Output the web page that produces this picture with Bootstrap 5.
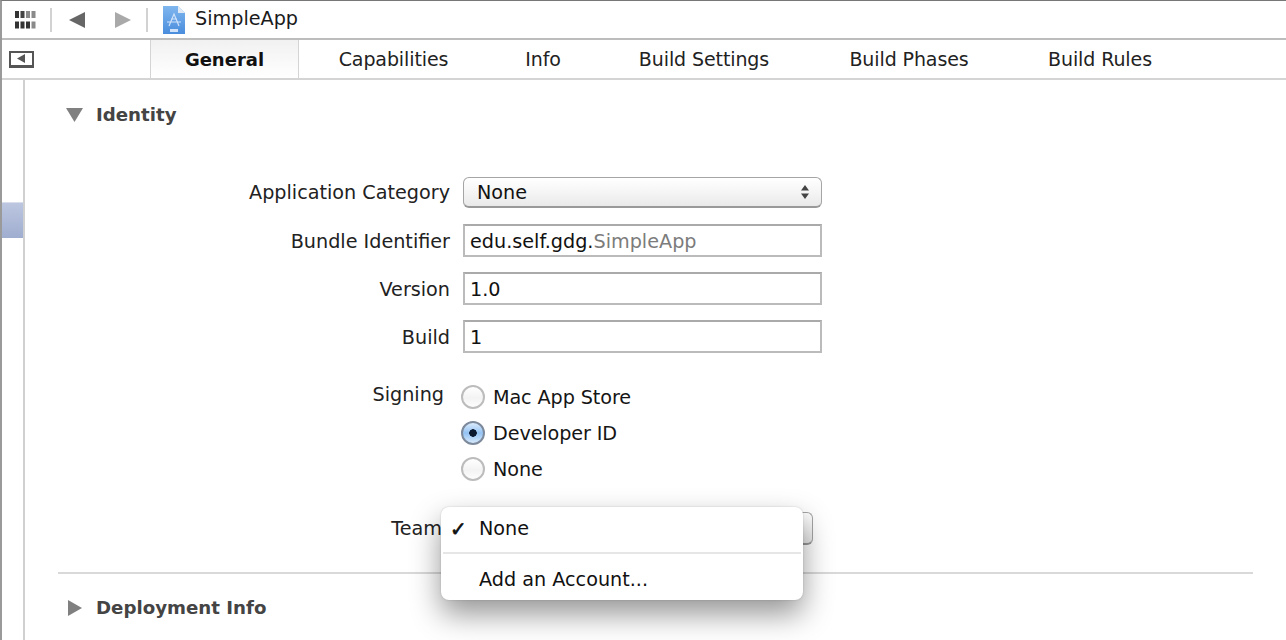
<!doctype html>
<html lang="en"><head><meta charset="utf-8"><title>SimpleApp</title>
<link rel="stylesheet" href="https://cdn.jsdelivr.net/npm/bootstrap@5.3.0/dist/css/bootstrap.min.css">
<style>
html,body{height:640px;overflow:hidden;background:#fff}
body{font-family:"DejaVu Sans",sans-serif;font-size:19.2px;color:#1a1a1a}
.xc-app{height:640px;border-left:2px solid #9a9a9a;border-top:1px solid #777}
.xc-top{height:39px;border-bottom:2px solid #bdbdbd;padding-left:13px}
.xc-sep{width:2px;height:24px;background:#d2d2d2;flex:none}
.xc-grid{margin-right:14px}
.xc-back{margin:0 30px 0 17px}
.xc-fwd{margin-right:15px}
.xc-doc{margin:0 10px 0 15px}
.xc-tabs{height:40px;border-bottom:2px solid #d4d4d4;background:#fff}
.xc-tog{width:25px;height:17px;border:2px solid #555;border-bottom-width:3px;margin-left:7px;margin-right:116px;background:#fff}
.xc-tab{height:38px;line-height:39px;font-size:19px;letter-spacing:-.1px;text-align:center;color:#222;flex:none}
.xc-act{width:149px;font-size:18px;letter-spacing:0;font-weight:700;color:#111;border-left:1px solid #d4d4d4;border-right:1px solid #d4d4d4;background:linear-gradient(#f1f1f1,#fff)}
.xc-t1{width:189px}.xc-t2{width:110px}.xc-t3{width:212px}.xc-t4{width:198px}.xc-t5{width:184px}
.xc-body{flex:1;min-height:0}
.xc-side{width:23px;border-right:2px solid #d0d0d0;flex:none;padding-top:122px}
.xc-mark{height:36px;width:21px;background:linear-gradient(#bcc6e0,#9fadcf);border-top:1px solid #d8deec}
.xc-main{flex:1;padding-left:33px;padding-right:33px;min-width:0}
.xc-head{font-weight:700;color:#444;font-size:18.2px;gap:13px}
.xc-head1{height:24px;margin-top:23px;margin-left:8px}
.xc-head1 span{margin-top:-1px}
.xc-head2{margin-top:20px;margin-left:10px;gap:14px}
.xc-form{margin-top:50px;position:relative}
.xc-row{display:flex;align-items:baseline;gap:13px}
.xc-gap1{margin-top:16px}.xc-gap2{margin-top:15px}.xc-gap3{margin-top:26px}.xc-gap4{margin-top:25px}
.xc-lab{width:392px;text-align:right;flex:none;color:#222}
.xc-signlab{line-height:32px;padding-right:6px}
.xc-teamlab{padding-right:8px;padding-top:2px}
.xc-ctl{width:359px;height:33px;border:2px solid #bbb;border-top-color:#aaa;padding-left:5px;line-height:31px;color:#111}
.xc-sel{height:31px;border:1px solid #a5a5a5;border-bottom:2px solid #999;border-radius:6px;padding-left:13px;background:linear-gradient(#fff,#f4f4f4 55%,#e9e9e9);line-height:27px}
.xc-teamsel{width:350px;height:33px}
.xc-arrows{margin-right:11px}
.xc-dim{color:#7c7c7c}
.xc-radio{width:24px;height:24px;border-radius:50%;border:2px solid #bcbcbc;background:linear-gradient(#fff,#f3f3f3 55%,#fdfdfd);flex:none}
.xc-on{background:radial-gradient(circle at 50% 50%,#0c1a30 0 3.5px,transparent 4px),linear-gradient(#dcebfc,#93c2f3 50%,#d6e9fc);border-color:#7d8a9c}
.xc-opt{display:flex;align-items:center;gap:8px;height:36px;margin-left:-2px;color:#151515;letter-spacing:-.1px}
.xc-tx{padding-top:2px}
.xc-menu{position:absolute;left:383px;top:330px;width:362px;height:93px;background:#fff;border-radius:8px;box-shadow:0 14px 30px rgba(0,0,0,.42),0 0 2px rgba(0,0,0,.18);z-index:2;color:#111}
.xc-mi{height:45px;line-height:44px;padding-left:38px;position:relative}
.xc-mi2{line-height:51px;height:46px}
.xc-chk{position:absolute;left:9px;top:0;font-size:20px;font-weight:700;-webkit-text-stroke:.7px #111}
.xc-msep{height:2px;background:#e6e6e6;margin:0 2px}
.xc-rule{height:2px;background:#d9d9d9;margin-top:27px}
</style></head>
<body>
<div class="xc-app d-flex flex-column">
  <div class="xc-top d-flex align-items-center">
    <svg class="xc-grid" width="21" height="18" viewBox="0 0 21 18"><g fill="#333"><rect width="4" height="7" x="0" y="0"/><rect width="4" height="7" x="5.5" y="0" fill="#444"/><rect width="4" height="7" x="11" y="0" fill="#8a8a8a"/><rect width="4" height="7" x="16.5" y="0" fill="#8a8a8a"/><rect width="4" height="7" x="0" y="10.5"/><rect width="4" height="7" x="5.5" y="10.5"/><rect width="4" height="7" x="11" y="10.5"/><rect width="4" height="7" x="16.5" y="10.5" fill="#8a8a8a"/></g></svg>
    <span class="xc-sep"></span>
    <svg class="xc-back" width="16" height="16" viewBox="0 0 16 16"><path d="M0 8 16 0V16Z" fill="#666"/></svg>
    <svg class="xc-fwd" width="16" height="16" viewBox="0 0 16 16"><path d="M16 8 0 0V16Z" fill="#a9a9a9"/></svg>
    <span class="xc-sep"></span>
    <svg class="xc-doc" width="22" height="28" viewBox="0 0 22 28"><defs><linearGradient id="xcd" x1="0" y1="0" x2="0" y2="1"><stop offset="0" stop-color="#7fb6ee"/><stop offset="1" stop-color="#4a8ddd"/></linearGradient></defs><path d="M0 0H15L22 7V28H0Z" fill="url(#xcd)"/><path d="M15 0 22 7H15Z" fill="#dfe9f6"/><path d="M6 20 11 8 16 20M4 16H18M8 13H14" fill="none" stroke="#cfe2fa" stroke-width="1.2"/><rect x="7" y="23" width="8" height="3" fill="#cfe2fa"/></svg>
    <span>SimpleApp</span>
  </div>
  <div class="xc-tabs d-flex">
    <div class="d-flex align-items-center">
      <div class="xc-tog d-flex align-items-center justify-content-center"><svg width="9" height="9" viewBox="0 0 9 9"><path d="M0 4.5 8 0V9Z" fill="#555"/></svg></div>
    </div>
    <div class="xc-tab xc-act">General</div>
    <div class="xc-tab xc-t1">Capabilities</div>
    <div class="xc-tab xc-t2">Info</div>
    <div class="xc-tab xc-t3">Build Settings</div>
    <div class="xc-tab xc-t4">Build Phases</div>
    <div class="xc-tab xc-t5">Build Rules</div>
  </div>
  <div class="xc-body d-flex">
    <div class="xc-side"><div class="xc-mark"></div></div>
    <div class="xc-main">
      <div class="xc-head xc-head1 d-flex align-items-center">
        <svg width="17" height="14" viewBox="0 0 17 14"><path d="M0 0H17L8.5 14Z" fill="#808080"/></svg><span>Identity</span>
      </div>
      <div class="xc-form">
        <div class="xc-row"><div class="xc-lab">Application Category</div>
          <div class="xc-ctl xc-sel d-flex justify-content-between align-items-center"><span>None</span><svg class="xc-arrows" width="10" height="16" viewBox="0 0 10 16"><path d="M5 1 9 6.5H1ZM5 15 9 9.5H1Z" fill="#444"/></svg></div></div>
        <div class="xc-row xc-gap1"><div class="xc-lab">Bundle Identifier</div><div class="xc-ctl">edu.self.gdg.<span class="xc-dim">SimpleApp</span></div></div>
        <div class="xc-row xc-gap2"><div class="xc-lab">Version</div><div class="xc-ctl">1.0</div></div>
        <div class="xc-row xc-gap2"><div class="xc-lab">Build</div><div class="xc-ctl">1</div></div>
        <div class="xc-row align-items-start xc-gap3">
          <div class="xc-lab xc-signlab">Signing</div>
          <div>
            <div class="xc-opt"><span class="xc-radio"></span><span class="xc-tx">Mac App Store</span></div>
            <div class="xc-opt"><span class="xc-radio xc-on"></span><span class="xc-tx">Developer ID</span></div>
            <div class="xc-opt"><span class="xc-radio"></span><span class="xc-tx">None</span></div>
          </div>
        </div>
        <div class="xc-row align-items-center xc-gap4"><div class="xc-lab xc-teamlab">Team</div><div class="xc-ctl xc-sel xc-teamsel"></div></div>
        <div class="xc-menu">
          <div class="xc-mi"><span class="xc-chk">✓</span>None</div>
          <div class="xc-msep"></div>
          <div class="xc-mi xc-mi2">Add an Account...</div>
        </div>
        <div class="xc-rule"></div>
        <div class="xc-head xc-head2 d-flex align-items-center">
          <svg width="14" height="16" viewBox="0 0 14 16"><path d="M0 0 14 8 0 16Z" fill="#808080"/></svg><span>Deployment Info</span>
        </div>
      </div>
    </div>
  </div>
</div>
<script src="https://cdn.jsdelivr.net/npm/bootstrap@5.3.0/dist/js/bootstrap.bundle.min.js"></script>
</body></html>
